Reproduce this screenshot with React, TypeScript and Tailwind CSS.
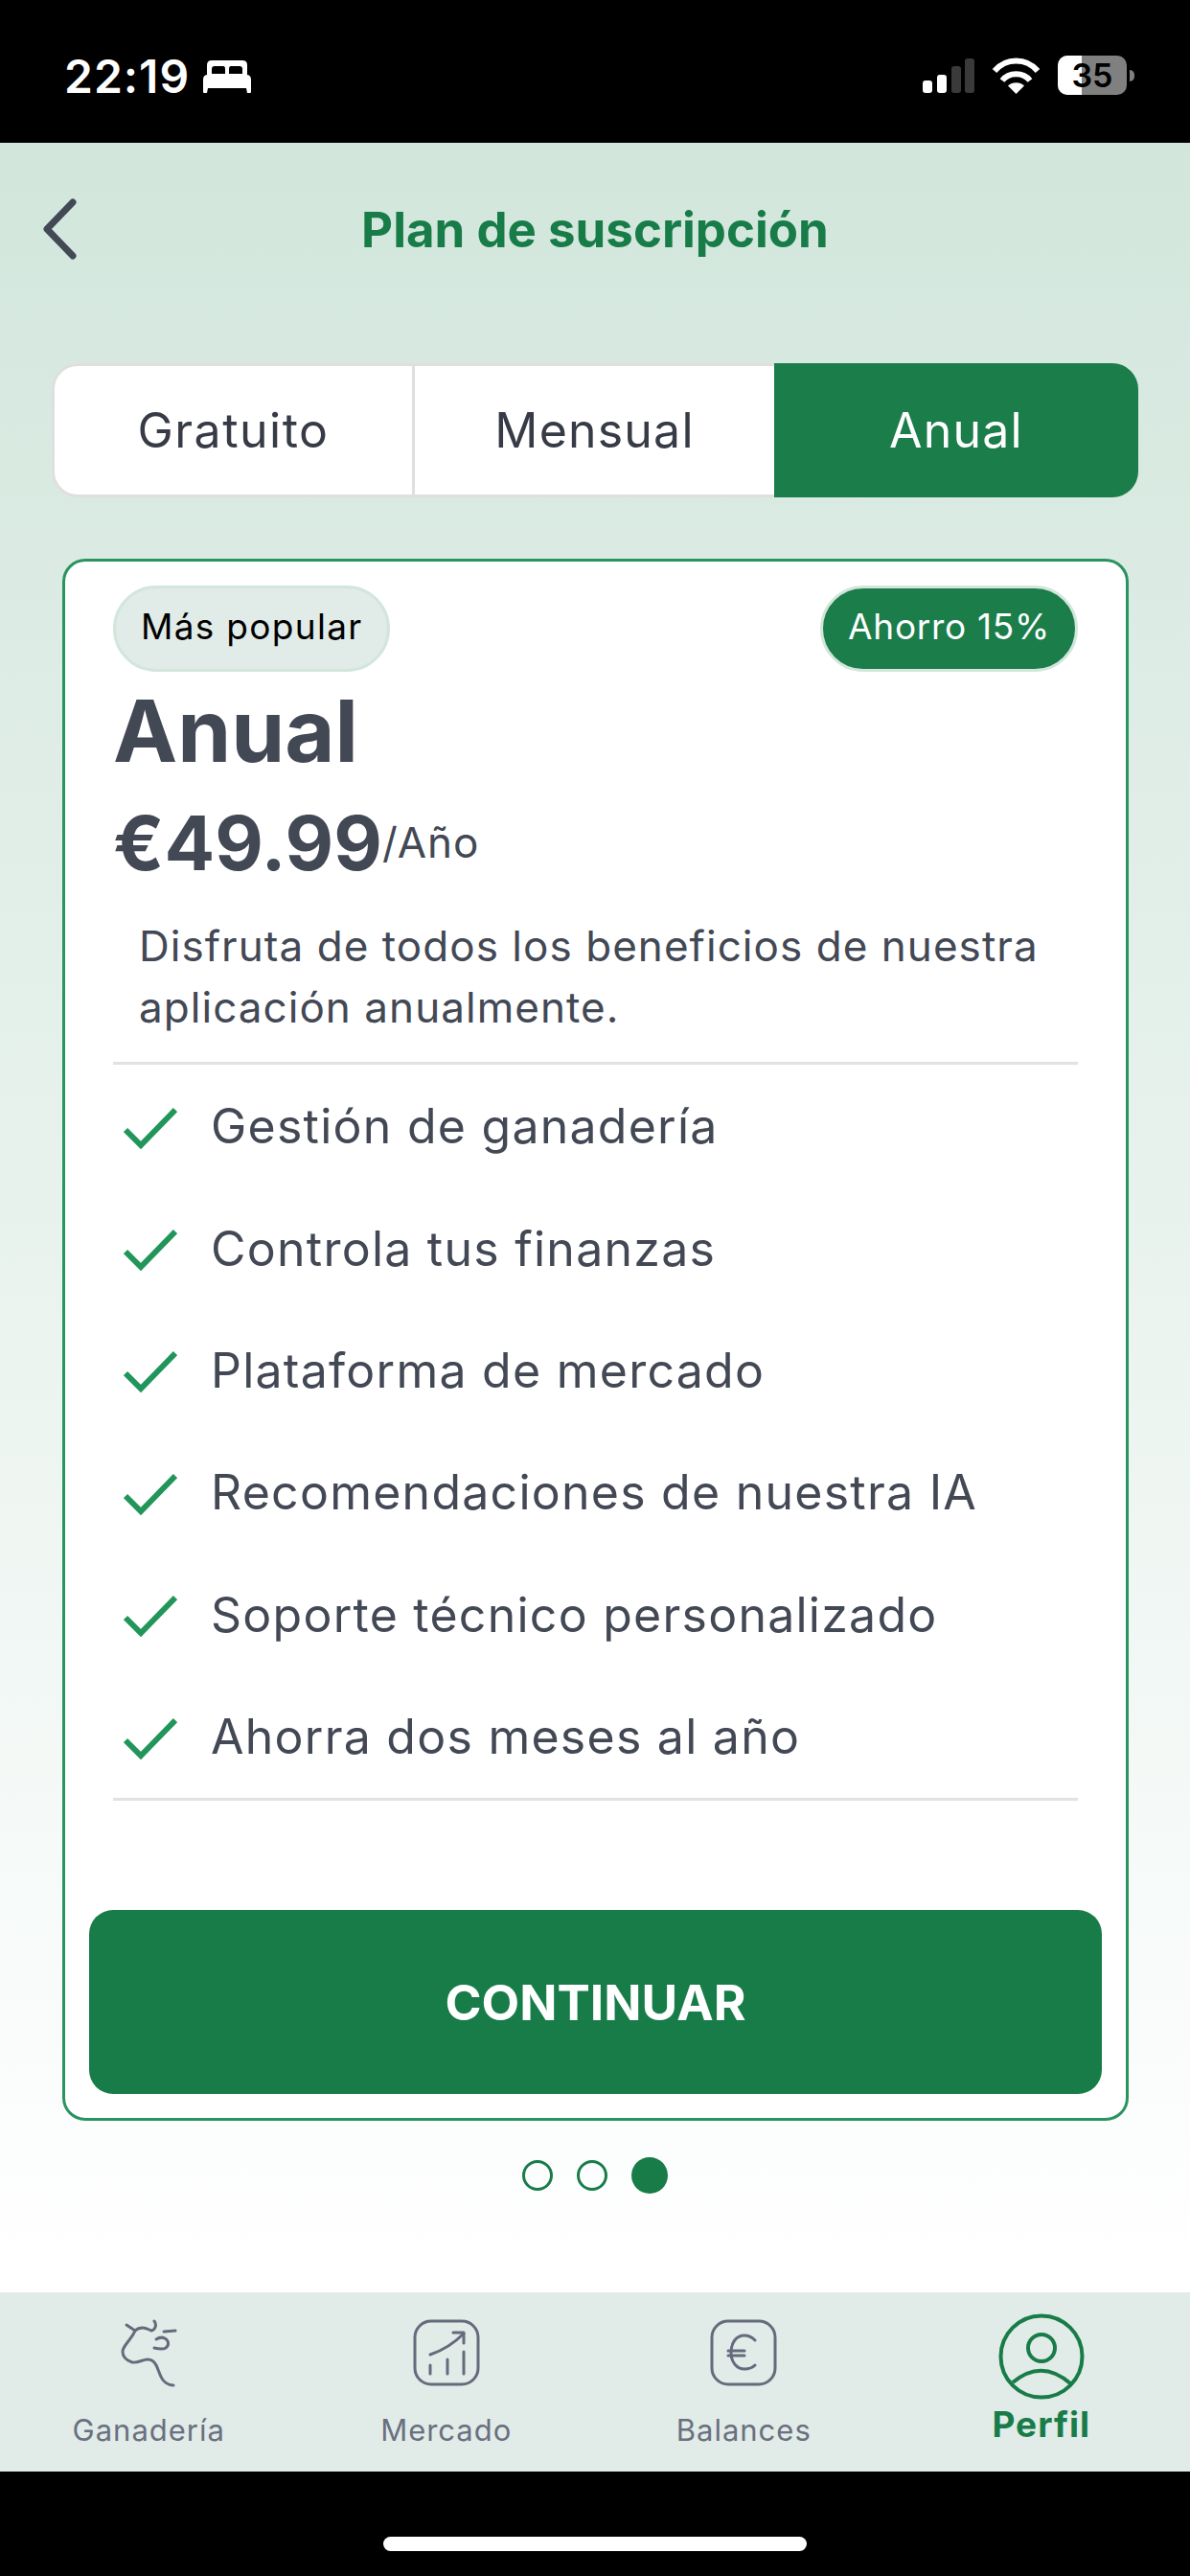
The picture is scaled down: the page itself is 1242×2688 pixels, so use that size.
import React from "react";

const features = [
  "Gestión de ganadería",
  "Controla tus finanzas",
  "Plataforma de mercado",
  "Recomendaciones de nuestra IA",
  "Soporte técnico personalizado",
  "Ahorra dos meses al año",
];

function Check() {
  return (
    <svg width="56" height="44" viewBox="0 0 56 44" fill="none" className="shrink-0 mt-[2px]">
      <path d="M2 24 L18 40 L54 3" stroke="#22955a" strokeWidth="6" />
    </svg>
  );
}

function Cow() {
  return (
    <svg width="60" height="72" viewBox="0 0 60 72" fill="none" stroke="#656b7c" strokeWidth="3" strokeLinecap="round" strokeLinejoin="round">
      <path d="M7 6 L16 12 C18 10 21 9 24 9 C28 9 30 11 33 12 C37 11 39 6 36 2" />
      <path d="M16 12 C14 17 11 20 9 23 C6 27 3 30 3 34 C3 39 7 43 13 45 C19 46 24 42 29 42 C33 42 36 44 38 48 C40 52 41 56 43 60 C45 65 50 69 56 69" />
      <path d="M46 13 L58 12" />
      <path d="M38 21 C41 19 45 19 47 20 C51 22 52 27 48 30 C45 32 40 31 36 30" />
    </svg>
  );
}

function Market() {
  return (
    <svg width="70" height="70" viewBox="0 0 70 70" fill="none" stroke="#656b7c" strokeWidth="3" strokeLinecap="round" strokeLinejoin="round">
      <rect x="2" y="2" width="66" height="66" rx="17" />
      <path d="M18 37 C30 33 42 26 53 15" />
      <path d="M42 14 L53 14 L53 25" />
      <path d="M18 48 L18 57 M36 42 L36 57 M53 34 L53 57" />
    </svg>
  );
}

function Euro() {
  return (
    <svg width="70" height="70" viewBox="0 0 70 70" fill="none" stroke="#656b7c" strokeWidth="3" strokeLinecap="round" strokeLinejoin="round">
      <rect x="2" y="2" width="66" height="66" rx="17" />
      <path d="M47 22 C43 18 39 17 36 17 C27 17 22 25 22 35 C22 45 28 52 36 52 C40 52 44 51 47 48" />
      <path d="M19 33 L36 33 M19 38 L36 38" />
    </svg>
  );
}

function Profile() {
  return (
    <svg width="90" height="90" viewBox="0 0 90 90" fill="none" stroke="#187c49" strokeWidth="4">
      <circle cx="45" cy="45" r="42.5" />
      <circle cx="45" cy="36" r="14" />
      <path d="M15 72 Q45 47 75 73" />
    </svg>
  );
}

function Bed() {
  return (
    <svg width="50" height="34" viewBox="0 0 50 34" className="shrink-0">
      <path d="M4 15 L4 5 Q4 0 9 0 L41 0 Q46 0 46 5 L46 15 Z" fill="#fff" />
      <path d="M9 14 L9 9 Q9 6 12 6 L21 6 Q23 6 23 9 L23 14 Z" fill="#000" />
      <path d="M27 14 L27 9 Q27 6 29 6 L38 6 Q41 6 41 9 L41 14 Z" fill="#000" />
      <path d="M0 20 Q0 15 5 15 L45 15 Q50 15 50 20 L50 33 Q50 34 49 34 L46 34 L45 29 L5 29 L4 34 L1 34 Q0 34 0 33 Z" fill="#fff" />
    </svg>
  );
}

function NavItem({ icon, label, active }: { icon: React.ReactNode; label: string; active?: boolean }) {
  return (
    <div className="flex-1 flex flex-col items-center">
      <div className={`h-[90px] flex justify-center ${active ? "items-start" : "items-start pt-[6px]"}`}>{icon}</div>
      <span
        className={
          active
            ? "mt-[4px] text-[37px] font-bold text-[#187c49] leading-[44px] tracking-[1px]"
            : "mt-[10px] text-[31px] text-[#6a7080] leading-[44px] tracking-[1px]"
        }
      >
        {label}
      </span>
    </div>
  );
}

export default function App() {
  return (
    <div className="w-[1242px] h-[2688px] flex flex-col bg-black overflow-hidden font-['Inter',sans-serif]">
      {/* Status bar */}
      <div className="h-[149px] shrink-0 flex items-start justify-between pl-[67px] pr-[58px] pt-[52px]">
        <div className="flex items-center gap-[14px]">
          <span className="text-white text-[48px] font-semibold leading-[56px] tracking-[1px]">22:19</span>
          <Bed />
        </div>
        <div className="flex items-center mt-[6px]">
          <svg width="54" height="36" viewBox="0 0 54 36" className="mr-[18px]">
            <rect x="0" y="23" width="10" height="13" rx="3" fill="#fff" />
            <rect x="15" y="17" width="10" height="19" rx="3" fill="#fff" />
            <rect x="30" y="8" width="10" height="28" rx="3" fill="#3a3a3a" />
            <rect x="44" y="0" width="10" height="36" rx="3" fill="#3a3a3a" />
          </svg>
          <svg width="51" height="38" viewBox="0 0 51 38" fill="none" stroke="#fff" strokeWidth="6" className="mr-[18px]">
            <path d="M3 14 C15 0 36 0 48 14" />
            <path d="M11 24 C18 15 33 15 40 24" />
            <path d="M25.5 38 L17 29.5 C21 25 30 25 34 29.5 Z" fill="#fff" stroke="none" />
          </svg>
          <div className="relative w-[72px] h-[41px] rounded-[10px] overflow-hidden flex bg-[#808080]">
            <div className="w-[25px] h-full bg-white" />
            <span className="absolute inset-0 flex items-center justify-center text-black text-[34px] font-semibold leading-none">35</span>
          </div>
          <div className="w-[5px] h-[12px] ml-[3px] rounded-r-full bg-[#808080]" />
        </div>
      </div>

      {/* Main */}
      <div className="flex-1 flex flex-col bg-gradient-to-b from-[#d2e6dc] to-white">
        <div className="h-[230px] shrink-0 flex items-start px-[44px] pt-[58px]">
          <svg width="40" height="64" viewBox="0 0 40 64" fill="none" stroke="#434855" strokeWidth="7" strokeLinecap="round" strokeLinejoin="round" className="shrink-0">
            <path d="M32 4 L5 32 L32 60" />
          </svg>
          <span className="flex-1 text-center text-[#187c49] text-[51px] font-bold leading-[64px] pt-[1px]">Plan de suscripción</span>
          <div className="w-[40px] shrink-0" />
        </div>

        <div className="ml-[54px] w-[1134px] h-[140px] shrink-0 flex">
          <div className="w-[379px] flex items-center justify-center bg-white rounded-l-[27px] border-y-[3px] border-l-[3px] border-r-[3px] border-[#dfdfdf] text-[50px] tracking-[1.5px] text-[#363b46]">
            Gratuito
          </div>
          <div className="w-[375px] flex items-center justify-center bg-white border-y-[3px] border-[#dfdfdf] text-[50px] tracking-[1.2px] text-[#363b46]">
            Mensual
          </div>
          <div className="w-[380px] flex items-center justify-center bg-[#1a7d4a] rounded-r-[27px] text-[50px] tracking-[1.2px] text-white">
            Anual
          </div>
        </div>

        <div className="ml-[65px] w-[1113px] mt-[64px] h-[1630px] shrink-0 flex flex-col rounded-[24px] bg-white border-[3px] border-[#2a9460] px-[25px]">
          <div className="flex items-center justify-between px-[25px] mt-[25px]">
            <span className="h-[90px] flex items-center px-[26px] pb-[5px] rounded-full bg-[#e1ebe7] border-[3px] border-[#d2e6dc] text-black text-[37px] tracking-[1.3px]">
              Más popular
            </span>
            <span className="h-[90px] flex items-center px-[26px] pb-[5px] rounded-full bg-[#1a7d4a] border-[3px] border-[#d2e6dc] text-white text-[37px] tracking-[0.7px]">
              Ahorro 15%
            </span>
          </div>
          <div className="px-[25px] text-[#434855] text-[90px] font-bold leading-[110px] mt-[7px]">Anual</div>
          <div className="px-[25px] flex items-start mt-[12px]">
            <span className="text-[#434855] text-[78px] font-bold leading-[100px]">€49.99</span>
            <span className="text-[#434855] text-[44px] leading-[60px] tracking-[1px] mt-[19px]">/Año</span>
          </div>
          <div className="pl-[52px] pr-[25px] text-[#434855] text-[44px] leading-[64px] tracking-[1.05px] mt-[25px]">
            Disfruta de todos los beneficios de nuestra aplicación anualmente.
          </div>
          <div className="mx-[25px] mt-[25px] border-t-[3px] border-[#e1e1e6]" />
          <div className="mx-[25px] flex flex-col pt-[1px]">
            {features.map((f) => (
              <div key={f} className="h-[127.4px] flex items-center gap-[35px] pl-[11px]">
                <Check />
                <span className="text-[#434855] text-[50px] tracking-[1.25px]">{f}</span>
              </div>
            ))}
          </div>
          <div className="mx-[25px] border-t-[3px] border-[#e1e1e6]" />
          <div className="mt-[114px] h-[192px] rounded-[25px] bg-[#187c49] flex items-center justify-center text-white text-[51.5px] font-bold">
            CONTINUAR
          </div>
        </div>

        <div className="mt-[38px] flex justify-center items-center gap-[25px]">
          <div className="w-[32px] h-[32px] rounded-full border-[3px] border-[#187c49]" />
          <div className="w-[32px] h-[32px] rounded-full border-[3px] border-[#187c49]" />
          <div className="w-[38px] h-[38px] rounded-full bg-[#187c49]" />
        </div>
      </div>

      {/* Tab bar */}
      <div className="h-[187px] shrink-0 flex bg-[#e1ebe7] pt-[22px]">
        <NavItem icon={<Cow />} label="Ganadería" />
        <NavItem icon={<Market />} label="Mercado" />
        <NavItem icon={<Euro />} label="Balances" />
        <NavItem icon={<Profile />} label="Perfil" active />
      </div>

      {/* Home indicator */}
      <div className="h-[109px] shrink-0 flex justify-center pt-[68px]">
        <div className="w-[442px] h-[15px] rounded-full bg-white" />
      </div>
    </div>
  );
}
